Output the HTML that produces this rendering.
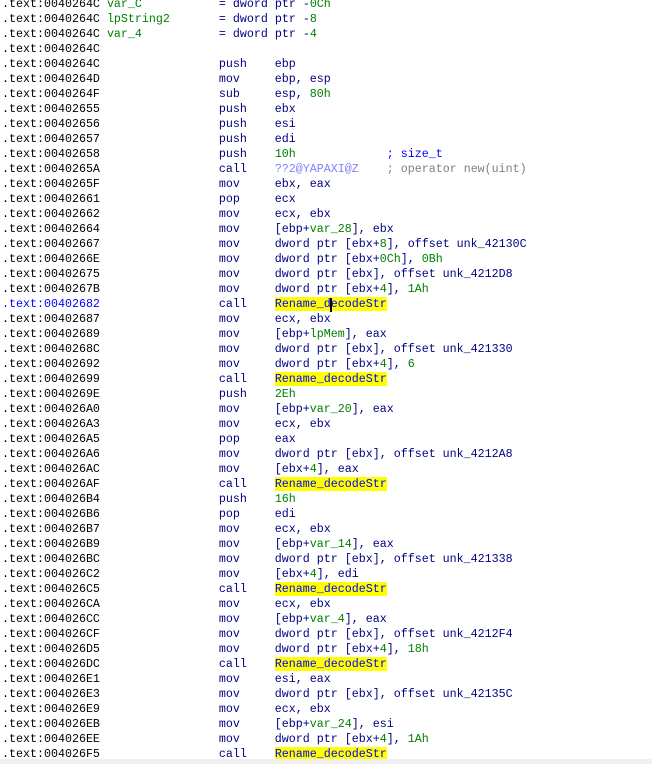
<!DOCTYPE html>
<html><head><meta charset="utf-8"><style>
html,body{margin:0;padding:0;background:#fff;width:652px;height:764px;overflow:hidden}
pre{margin:0;position:absolute;left:2px;top:-3px;font-family:"Liberation Mono",monospace;font-size:11.67px;line-height:15px;color:#000}
.m{color:#000080}.n{color:#008000}.v{color:#008000}
.h{background:#ffff00;color:#0000ff}
.b{color:#0000ff}.g{color:#808080}.p{color:#8080ff}
.bar{position:absolute;left:0;top:759px;width:652px;height:5px;background:#f0f0f0}
.cur{position:absolute;left:330px;top:298px;width:2px;height:14px;background:#000}
</style></head><body>
<pre>.text:0040264C <span class="v">var_C</span>           <span class="m">= dword ptr -<span class="n">0Ch</span></span>
.text:0040264C <span class="v">lpString2</span>       <span class="m">= dword ptr -<span class="n">8</span></span>
.text:0040264C <span class="v">var_4</span>           <span class="m">= dword ptr -<span class="n">4</span></span>
.text:0040264C
.text:0040264C                 <span class="m">push    ebp</span>
.text:0040264D                 <span class="m">mov     ebp, esp</span>
.text:0040264F                 <span class="m">sub     esp, <span class="n">80h</span></span>
.text:00402655                 <span class="m">push    ebx</span>
.text:00402656                 <span class="m">push    esi</span>
.text:00402657                 <span class="m">push    edi</span>
.text:00402658                 <span class="m">push    <span class="n">10h</span>             <span class="b">; size_t</span></span>
.text:0040265A                 <span class="m">call    <span class="p">??2@YAPAXI@Z</span>    <span class="g">; operator new(uint)</span></span>
.text:0040265F                 <span class="m">mov     ebx, eax</span>
.text:00402661                 <span class="m">pop     ecx</span>
.text:00402662                 <span class="m">mov     ecx, ebx</span>
.text:00402664                 <span class="m">mov     [ebp+<span class="v">var_28</span>], ebx</span>
.text:00402667                 <span class="m">mov     dword ptr [ebx+<span class="n">8</span>], offset unk_42130C</span>
.text:0040266E                 <span class="m">mov     dword ptr [ebx+<span class="n">0Ch</span>], <span class="n">0Bh</span></span>
.text:00402675                 <span class="m">mov     dword ptr [ebx], offset unk_4212D8</span>
.text:0040267B                 <span class="m">mov     dword ptr [ebx+<span class="n">4</span>], <span class="n">1Ah</span></span>
<span class="b">.text:00402682</span>                 <span class="m">call    <span class="h">Rename_decodeStr</span></span>
.text:00402687                 <span class="m">mov     ecx, ebx</span>
.text:00402689                 <span class="m">mov     [ebp+<span class="v">lpMem</span>], eax</span>
.text:0040268C                 <span class="m">mov     dword ptr [ebx], offset unk_421330</span>
.text:00402692                 <span class="m">mov     dword ptr [ebx+<span class="n">4</span>], <span class="n">6</span></span>
.text:00402699                 <span class="m">call    <span class="h">Rename_decodeStr</span></span>
.text:0040269E                 <span class="m">push    <span class="n">2Eh</span></span>
.text:004026A0                 <span class="m">mov     [ebp+<span class="v">var_20</span>], eax</span>
.text:004026A3                 <span class="m">mov     ecx, ebx</span>
.text:004026A5                 <span class="m">pop     eax</span>
.text:004026A6                 <span class="m">mov     dword ptr [ebx], offset unk_4212A8</span>
.text:004026AC                 <span class="m">mov     [ebx+<span class="n">4</span>], eax</span>
.text:004026AF                 <span class="m">call    <span class="h">Rename_decodeStr</span></span>
.text:004026B4                 <span class="m">push    <span class="n">16h</span></span>
.text:004026B6                 <span class="m">pop     edi</span>
.text:004026B7                 <span class="m">mov     ecx, ebx</span>
.text:004026B9                 <span class="m">mov     [ebp+<span class="v">var_14</span>], eax</span>
.text:004026BC                 <span class="m">mov     dword ptr [ebx], offset unk_421338</span>
.text:004026C2                 <span class="m">mov     [ebx+<span class="n">4</span>], edi</span>
.text:004026C5                 <span class="m">call    <span class="h">Rename_decodeStr</span></span>
.text:004026CA                 <span class="m">mov     ecx, ebx</span>
.text:004026CC                 <span class="m">mov     [ebp+<span class="v">var_4</span>], eax</span>
.text:004026CF                 <span class="m">mov     dword ptr [ebx], offset unk_4212F4</span>
.text:004026D5                 <span class="m">mov     dword ptr [ebx+<span class="n">4</span>], <span class="n">18h</span></span>
.text:004026DC                 <span class="m">call    <span class="h">Rename_decodeStr</span></span>
.text:004026E1                 <span class="m">mov     esi, eax</span>
.text:004026E3                 <span class="m">mov     dword ptr [ebx], offset unk_42135C</span>
.text:004026E9                 <span class="m">mov     ecx, ebx</span>
.text:004026EB                 <span class="m">mov     [ebp+<span class="v">var_24</span>], esi</span>
.text:004026EE                 <span class="m">mov     dword ptr [ebx+<span class="n">4</span>], <span class="n">1Ah</span></span>
.text:004026F5                 <span class="m">call    <span class="h">Rename_decodeStr</span></span>
</pre>
<div class="cur"></div>
<div class="bar"></div>
</body></html>
